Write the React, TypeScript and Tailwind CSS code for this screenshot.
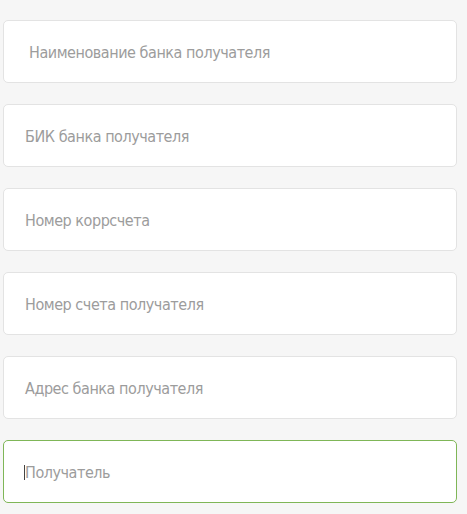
const fields = [
  { label: "Наименование банка получателя", indent: "pl-[25px]" },
  { label: "БИК банка получателя", indent: "pl-[21px]" },
  { label: "Номер коррсчета", indent: "pl-[21px]" },
  { label: "Номер счета получателя", indent: "pl-[21px]" },
  { label: "Адрес банка получателя", indent: "pl-[21px]" },
];

export default function App() {
  return (
    <div
      className="min-h-[514px] w-[467px] bg-[#f6f6f6] pl-[3px] pt-[20px]"
      style={{ fontFamily: '"DejaVu Sans Condensed", "Liberation Sans Narrow", sans-serif' }}
    >
      <div className="flex w-[454px] flex-col gap-[21px]">
        {fields.map((f) => (
          <div
            key={f.label}
            className={`flex h-[63px] items-center rounded-[5px] border border-[#e3e3e3] bg-white pt-[2px] ${f.indent}`}
          >
            <span className="text-[16px] tracking-[-0.45px] text-[#9c9c9c]">{f.label}</span>
          </div>
        ))}
        <div className="flex h-[63px] items-center rounded-[5px] border border-[#7fb657] bg-white pl-[20px] pt-[2px]">
          <span className="h-[15px] w-px bg-[#444]" />
          <span className="text-[16px] tracking-[-0.45px] text-[#9c9c9c]">Получатель</span>
        </div>
      </div>
    </div>
  );
}
